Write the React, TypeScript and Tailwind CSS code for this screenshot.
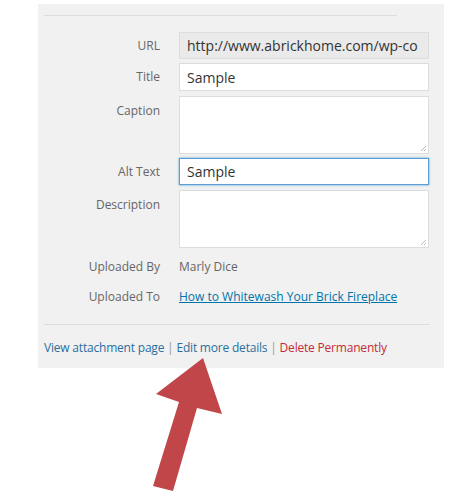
import React from 'react';

const FONT = { fontFamily: '"Open Sans", "Noto Sans", sans-serif' };

function Label({ children, top }: { children: React.ReactNode; top?: boolean }) {
  return (
    <div
      className={`w-[116px] shrink-0 text-right text-[12px] text-[#666] ${top ? 'pt-[6px]' : 'self-center'}`}
    >
      {children}
    </div>
  );
}

export default function App() {
  return (
    <div className="relative w-[470px] h-[500px] bg-white overflow-hidden" style={FONT}>
      {/* ── Attachment details panel ── */}
      <div className="ml-[38px] mt-[4px] w-[406px] h-[364px] bg-[#f1f1f1] px-[6px] pt-[11px]">
        <div className="w-[353px] h-px bg-[#dddddd]" />

        <div className="flex flex-col mt-[16px]">
          <div className="flex items-center gap-[19px] h-[27px]">
            <Label>URL</Label>
            <div className="w-[250px] h-[27px] bg-[#eaeaea] border border-[#dddddd] pl-[7px] flex items-center text-[14px] text-[#333] overflow-hidden whitespace-nowrap">
              http://www.abrickhome.com/wp-co
            </div>
          </div>

          <div className="flex items-center gap-[19px] h-[28px] mt-[4px]">
            <Label>Title</Label>
            <div className="w-[250px] h-[28px] bg-white border border-[#dddddd] pl-[7px] flex items-center text-[14px] text-[#333]">
              Sample
            </div>
          </div>

          <div className="flex gap-[19px] h-[58px] mt-[5px]">
            <Label top>Caption</Label>
            <div className="relative w-[250px] h-[58px] bg-white border border-[#dddddd]">
              <ResizeGrip />
            </div>
          </div>

          <div className="flex items-center gap-[19px] h-[27px] mt-[4px]">
            <Label>Alt Text</Label>
            <div className="w-[250px] h-[27px] bg-white border border-[#5b9dd9] shadow-[0_0_2px_rgba(30,140,190,0.8)] pl-[7px] flex items-center text-[14px] text-[#333]">
              Sample
            </div>
          </div>

          <div className="flex gap-[19px] h-[58px] mt-[5px]">
            <Label top>Description</Label>
            <div className="relative w-[250px] h-[58px] bg-white border border-[#dddddd]">
              <ResizeGrip />
            </div>
          </div>

          <div className="flex items-center gap-[19px] h-[20px] mt-[9px]">
            <Label>Uploaded By</Label>
            <div className="text-[12px] text-[#666]">Marly Dice</div>
          </div>

          <div className="flex items-center gap-[19px] h-[20px] mt-[10px]">
            <Label>Uploaded To</Label>
            <a className="text-[12px] text-[#0073aa] underline">How to Whitewash Your Brick Fireplace</a>
          </div>
        </div>

        <div className="w-[386px] h-px bg-[#dddddd] mt-[17px]" />

        <div className="mt-[14px] text-[12px] tracking-[-0.2px] text-[#666] whitespace-nowrap">
          <a className="text-[#2a6fa0]">View attachment page</a>
          <span className="text-[#999]"> | </span>
          <a className="text-[#2a6fa0]">Edit more details</a>
          <span className="text-[#999]"> | </span>
          <a className="text-[#c42b36]">Delete Permanently</a>
        </div>
      </div>

      {/* ── Red pointer arrow ── */}
      <svg className="absolute left-0 top-0" width="470" height="500" viewBox="0 0 470 500">
        <polygon
          points="203,358 222,414 197,408 173,491 153,486 179,402 156,394"
          fill="#c0464a"
        />
      </svg>
    </div>
  );
}

function ResizeGrip() {
  return (
    <svg className="absolute right-[1px] bottom-[1px]" width="7" height="7" viewBox="0 0 7 7">
      <path d="M6 1 L1 6 M6 4 L4 6" stroke="#aaa" strokeWidth="0.8" />
    </svg>
  );
}
